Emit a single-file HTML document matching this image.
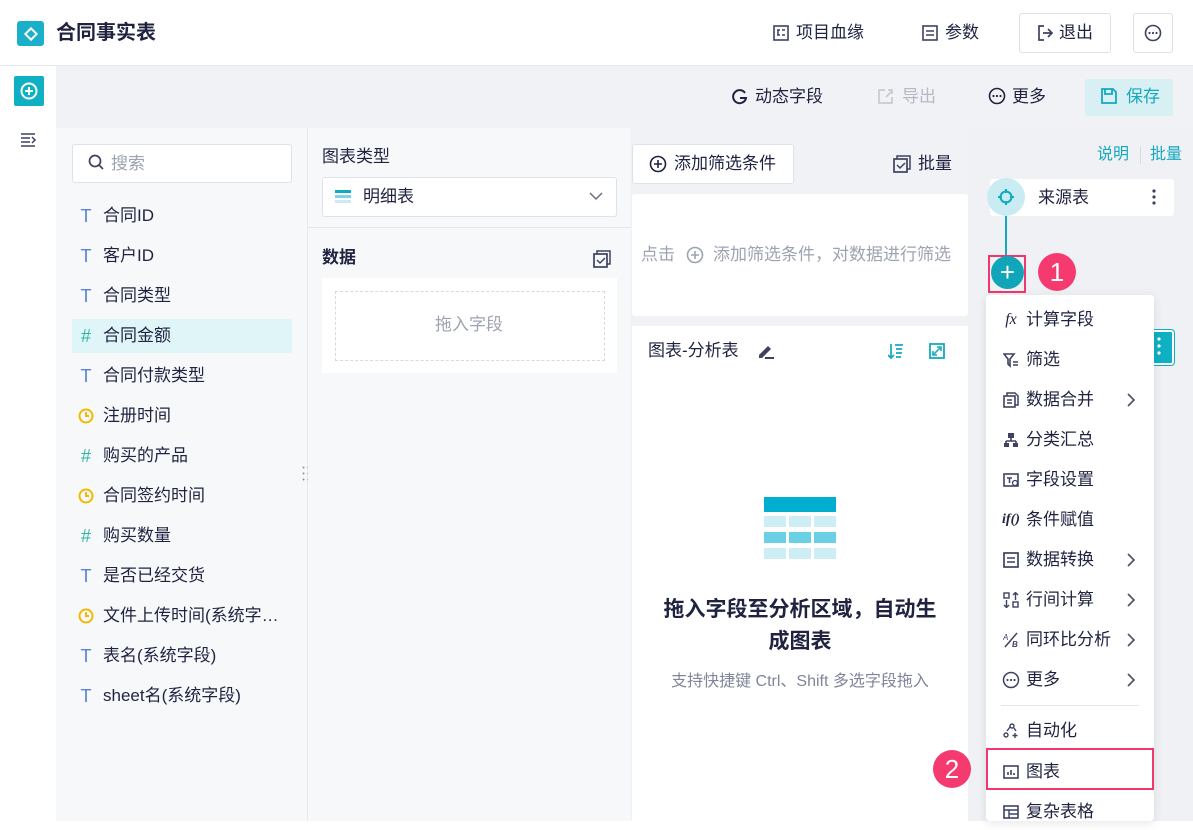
<!DOCTYPE html>
<html><head><meta charset="utf-8"><style>
*{box-sizing:border-box;margin:0;padding:0}
body{width:1193px;height:821px;overflow:hidden;background:#fff;font-family:"Liberation Sans","Noto Sans CJK SC",sans-serif;color:#1f2340;font-size:17px;line-height:22px;position:relative}
.a{position:absolute}
.t{position:absolute;white-space:nowrap}
svg{display:block}
.fi{position:absolute;left:72px;width:220px;height:34px;display:flex;align-items:center;padding-left:4px;padding-top:1px}
.fi .ic{width:20px;font-size:18px;text-align:center;margin-right:7px;display:flex;justify-content:center}
.mi{position:absolute;left:986px;width:168px;height:40px;display:flex;align-items:center;padding-left:16px;padding-top:3px;font-size:17px}
.mi .ico{width:18px;height:18px;margin-right:6px;display:flex;align-items:center;justify-content:center}
.mi .ar{position:absolute;right:18px;top:15px}
</style></head><body>
<!-- header -->
<div class="a" style="left:0;top:0;width:1193px;height:66px;background:#fff;border-bottom:1px solid #e4e6ec"></div>
<div class="a" style="left:17px;top:21px;width:27px;height:25px;background:#1ab0c9;border-radius:3px"></div>
<div class="a" style="left:26px;top:29px;width:10px;height:10px;border:2px solid #fff;transform:rotate(45deg)"></div>
<div class="t" style="left:56px;top:22px;font-size:20px;font-weight:bold;color:#1f2340">合同事实表</div>
<svg class="a" style="left:773px;top:25px" width="16" height="16"><rect x="1" y="1" width="14" height="14" fill="none" stroke="#3d4260" stroke-width="1.6"/><path d="M4 5h3M4 10h3M9 5h3M9 10h3M5 5v5" stroke="#3d4260" stroke-width="1.5"/></svg>
<div class="t" style="left:796px;top:22px">项目血缘</div>
<svg class="a" style="left:922px;top:25px" width="16" height="16"><rect x="1" y="1" width="14" height="14" fill="none" stroke="#3d4260" stroke-width="1.6"/><path d="M4 6h8M4 10h8" stroke="#3d4260" stroke-width="1.5"/></svg>
<div class="t" style="left:945px;top:22px">参数</div>
<div class="a" style="left:1019px;top:13px;width:92px;height:40px;border:1px solid #dde0e6;border-radius:3px;background:#fff"></div>
<svg class="a" style="left:1037px;top:25px" width="16" height="16"><path d="M7 1H2v14h5M6 8h9M11 4l4 4-4 4" fill="none" stroke="#3d4260" stroke-width="1.7"/></svg>
<div class="t" style="left:1059px;top:22px">退出</div>
<div class="a" style="left:1133px;top:13px;width:40px;height:40px;border:1px solid #dde0e6;border-radius:3px"></div>
<svg class="a" style="left:1144px;top:24px" width="18" height="18"><circle cx="9" cy="9" r="7.5" fill="none" stroke="#3d4260" stroke-width="1.6"/><circle cx="5.5" cy="9" r="1.1" fill="#3d4260"/><circle cx="9" cy="9" r="1.1" fill="#3d4260"/><circle cx="12.5" cy="9" r="1.1" fill="#3d4260"/></svg>
<!-- left sidebar -->
<div class="a" style="left:0;top:66px;width:56px;height:755px;background:#fff"></div>
<div class="a" style="left:14px;top:76px;width:30px;height:30px;background:#0fb0c4;border-radius:2px"></div>
<svg class="a" style="left:20px;top:82px" width="18" height="18"><circle cx="9" cy="9" r="7.5" fill="none" stroke="#fff" stroke-width="2"/><path d="M9 5v8M5 9h8" stroke="#fff" stroke-width="2"/></svg>
<svg class="a" style="left:21px;top:133px" width="16" height="14"><path d="M0 1h14M0 5h9M0 9h9M0 13h14M11 4l3 3-3 3" fill="none" stroke="#3d4260" stroke-width="1.5"/></svg>
<!-- gray area -->
<div class="a" style="left:56px;top:66px;width:1137px;height:755px;background:#f1f2f6"></div>
<!-- toolbar -->
<svg class="a" style="left:731px;top:88px" width="17" height="17"><path d="M14 5A6.5 6.5 0 1 0 15 10H9" fill="none" stroke="#1f2340" stroke-width="2"/></svg>
<div class="t" style="left:755px;top:86px">动态字段</div>
<svg class="a" style="left:877px;top:88px" width="17" height="17"><path d="M8 2H2v13h13V9M9 9l6-6M11 2h4v4" fill="none" stroke="#c7cad3" stroke-width="1.7"/></svg>
<div class="t" style="left:902px;top:86px;color:#b6b9c4">导出</div>
<svg class="a" style="left:988px;top:87px" width="18" height="18"><circle cx="9" cy="9" r="7.5" fill="none" stroke="#1f2340" stroke-width="1.6"/><circle cx="5.5" cy="9" r="1.1" fill="#1f2340"/><circle cx="9" cy="9" r="1.1" fill="#1f2340"/><circle cx="12.5" cy="9" r="1.1" fill="#1f2340"/></svg>
<div class="t" style="left:1012px;top:86px">更多</div>
<div class="a" style="left:1085px;top:79px;width:88px;height:37px;background:#d8eff3;border-radius:3px"></div>
<svg class="a" style="left:1101px;top:88px" width="16" height="16"><path d="M1 1h11l3 3v11H1z M4 1v5h7V1" fill="none" stroke="#13a9bf" stroke-width="1.8"/></svg>
<div class="t" style="left:1126px;top:86px;color:#13a9bf">保存</div>
<!-- field panel -->
<div class="a" style="left:56px;top:128px;width:251px;height:693px;background:#f7f8fa"></div>
<div class="a" style="left:307px;top:128px;width:1px;height:693px;background:#e6e8ee"></div>
<div class="a" style="left:72px;top:144px;width:220px;height:39px;background:#fff;border:1px solid #dfe2e8;border-radius:3px"></div>
<svg class="a" style="left:88px;top:154px" width="16" height="17"><circle cx="7" cy="7" r="5.5" fill="none" stroke="#3d4260" stroke-width="1.7"/><path d="M11 11l4 4" stroke="#3d4260" stroke-width="1.7"/></svg>
<div class="t" style="left:111px;top:153px;color:#9ea3b2">搜索</div>
<div class="a" style="left:72px;top:319px;width:220px;height:34px;background:#e0f5f8;border-radius:2px"></div>
<div class="fi" style="top:198px"><span class="ic" style="color:#5b82d0">T</span>合同ID</div>
<div class="fi" style="top:238px"><span class="ic" style="color:#5b82d0">T</span>客户ID</div>
<div class="fi" style="top:278px"><span class="ic" style="color:#5b82d0">T</span>合同类型</div>
<div class="fi" style="top:318px"><span class="ic" style="color:#2eb6a4">#</span>合同金额</div>
<div class="fi" style="top:358px"><span class="ic" style="color:#5b82d0">T</span>合同付款类型</div>
<div class="fi" style="top:398px"><span class="ic"><svg width="16" height="16"><circle cx="8" cy="8" r="6.5" fill="none" stroke="#f5b800" stroke-width="2"/><path d="M8 4v4h3" fill="none" stroke="#f5b800" stroke-width="2"/></svg></span>注册时间</div>
<div class="fi" style="top:438px"><span class="ic" style="color:#2eb6a4">#</span>购买的产品</div>
<div class="fi" style="top:478px"><span class="ic"><svg width="16" height="16"><circle cx="8" cy="8" r="6.5" fill="none" stroke="#f5b800" stroke-width="2"/><path d="M8 4v4h3" fill="none" stroke="#f5b800" stroke-width="2"/></svg></span>合同签约时间</div>
<div class="fi" style="top:518px"><span class="ic" style="color:#2eb6a4">#</span>购买数量</div>
<div class="fi" style="top:558px"><span class="ic" style="color:#5b82d0">T</span>是否已经交货</div>
<div class="fi" style="top:598px"><span class="ic"><svg width="16" height="16"><circle cx="8" cy="8" r="6.5" fill="none" stroke="#f5b800" stroke-width="2"/><path d="M8 4v4h3" fill="none" stroke="#f5b800" stroke-width="2"/></svg></span>文件上传时间(系统字…</div>
<div class="fi" style="top:638px"><span class="ic" style="color:#5b82d0">T</span>表名(系统字段)</div>
<div class="fi" style="top:678px"><span class="ic" style="color:#5b82d0">T</span>sheet名(系统字段)</div>
<svg class="a" style="left:302px;top:466px" width="8" height="16"><g fill="#8a90a0"><circle cx="1.5" cy="1.5" r="1"/><circle cx="6.5" cy="1.5" r="1"/><circle cx="1.5" cy="7.5" r="1"/><circle cx="6.5" cy="7.5" r="1"/><circle cx="1.5" cy="13.5" r="1"/><circle cx="6.5" cy="13.5" r="1"/></g></svg>
<!-- column 2 -->
<div class="a" style="left:308px;top:128px;width:323px;height:693px;background:#f7f8fa"></div>
<div class="t" style="left:322px;top:146px">图表类型</div>
<div class="a" style="left:322px;top:177px;width:295px;height:40px;background:#fff;border:1px solid #dfe2e8;border-radius:3px"></div>
<svg class="a" style="left:335px;top:190px" width="16" height="14"><rect width="16" height="3" fill="#13a9bf"/><rect y="5" width="16" height="3" fill="#7fd3e3"/><rect y="10" width="16" height="3" fill="#c7ecf3"/></svg>
<div class="t" style="left:363px;top:186px">明细表</div>
<svg class="a" style="left:589px;top:192px" width="14" height="9"><path d="M1 1l6 6 6-6" fill="none" stroke="#6a6f80" stroke-width="1.5"/></svg>
<div class="a" style="left:308px;top:227px;width:323px;height:1px;background:#e4e6ec"></div>
<div class="t" style="left:322px;top:247px;font-weight:bold">数据</div>
<svg class="a" style="left:593px;top:250px" width="18" height="18"><path d="M4 4V1h13v13h-3" fill="none" stroke="#3d4260" stroke-width="1.5"/><rect x="1" y="4" width="13" height="13" fill="none" stroke="#3d4260" stroke-width="1.7"/><path d="M4 10l3 3 5-5" fill="none" stroke="#3d4260" stroke-width="1.5"/></svg>
<div class="a" style="left:322px;top:278px;width:295px;height:95px;background:#fff"></div>
<div class="a" style="left:335px;top:291px;width:270px;height:70px;border:1px dashed #d6d9e1"></div>
<div class="t" style="left:435px;top:314px;color:#9ea3b2">拖入字段</div>
<!-- column 3 -->
<div class="a" style="left:632px;top:144px;width:162px;height:40px;background:#fff;border:1px solid #dfe2e8;border-radius:3px"></div>
<svg class="a" style="left:649px;top:155px" width="18" height="18"><circle cx="9" cy="9" r="7.5" fill="none" stroke="#1f2340" stroke-width="1.6"/><path d="M9 5v8M5 9h8" stroke="#1f2340" stroke-width="1.6"/></svg>
<div class="t" style="left:674px;top:153px">添加筛选条件</div>
<svg class="a" style="left:893px;top:155px" width="18" height="18"><path d="M4 4V1h13v13h-3" fill="none" stroke="#3d4260" stroke-width="1.5"/><rect x="1" y="4" width="13" height="13" fill="none" stroke="#3d4260" stroke-width="1.7"/><path d="M4 10l3 3 5-5" fill="none" stroke="#3d4260" stroke-width="1.5"/></svg>
<div class="t" style="left:918px;top:153px">批量</div>
<div class="a" style="left:632px;top:194px;width:336px;height:122px;background:#fff;border-radius:3px"></div>
<div class="t" style="left:641px;top:244px;color:#9ea3b2">点击</div>
<svg class="a" style="left:686px;top:246px" width="18" height="18"><circle cx="9" cy="9" r="7.5" fill="none" stroke="#9ea3b2" stroke-width="1.6"/><path d="M9 5v8M5 9h8" stroke="#9ea3b2" stroke-width="1.6"/></svg>
<div class="t" style="left:713px;top:244px;color:#9ea3b2">添加筛选条件，对数据进行筛选</div>
<div class="a" style="left:632px;top:326px;width:336px;height:495px;background:#fff"></div>
<div class="t" style="left:648px;top:340px">图表-分析表</div>
<svg class="a" style="left:757px;top:343px" width="18" height="16"><path d="M2 12l9-9 3 3-9 9H2z" fill="#3d4260"/><path d="M8 15h9" stroke="#3d4260" stroke-width="2"/></svg>
<svg class="a" style="left:888px;top:343px" width="16" height="16"><path d="M3 1v14M0 12l3 3 3-3M7 2h8M8 6h6M8 10h6M8 14h5" fill="none" stroke="#13a9bf" stroke-width="1.7"/></svg>
<svg class="a" style="left:929px;top:343px" width="16" height="16"><rect x="1" y="1" width="14" height="14" fill="none" stroke="#13a9bf" stroke-width="1.8"/><path d="M5 11l6-6M4 8v4h4M12 8V4H8" fill="none" stroke="#13a9bf" stroke-width="1.5"/></svg>
<svg class="a" style="left:764px;top:497px" width="72" height="64"><rect width="72" height="15" fill="#00afcf"/><g fill="#cdeef5"><rect y="19" width="22" height="11"/><rect x="25" y="19" width="22" height="11"/><rect x="50" y="19" width="22" height="11"/><rect y="51" width="22" height="11"/><rect x="25" y="51" width="22" height="11"/><rect x="50" y="51" width="22" height="11"/></g><g fill="#6ad0e3"><rect y="35" width="22" height="11"/><rect x="25" y="35" width="22" height="11"/><rect x="50" y="35" width="22" height="11"/></g></svg>
<div class="a" style="left:632px;top:594px;width:336px;text-align:center;font-size:21px;font-weight:bold;line-height:32px">拖入字段至分析区域，自动生<br>成图表</div>
<div class="a" style="left:632px;top:671px;width:336px;text-align:center;color:#80869a;font-size:16px">支持快捷键 Ctrl、Shift 多选字段拖入</div>
<!-- right panel -->
<div class="a" style="left:969px;top:128px;width:224px;height:693px;background:#f0f1f5"></div>
<div class="t" style="left:1097px;top:144px;color:#13a9bf;font-size:16px">说明</div>
<div class="a" style="left:1140px;top:146px;width:1px;height:18px;background:#d9dbe2"></div>
<div class="t" style="left:1150px;top:144px;color:#13a9bf;font-size:16px">批量</div>
<div class="a" style="left:990px;top:179px;width:184px;height:37px;background:#fff;border-radius:3px"></div>
<div class="a" style="left:987px;top:178px;width:38px;height:38px;border-radius:50%;background:#c9ecf2"></div>
<svg class="a" style="left:997px;top:188px" width="18" height="18"><circle cx="9" cy="9" r="5.5" fill="none" stroke="#13a9bf" stroke-width="2"/><path d="M9 1v4M9 13v4M1 9h4M13 9h4" stroke="#13a9bf" stroke-width="2"/></svg>
<div class="t" style="left:1038px;top:187px">来源表</div>
<svg class="a" style="left:1152px;top:189px" width="4" height="16"><g fill="#3d4260"><circle cx="2" cy="2" r="1.6"/><circle cx="2" cy="8" r="1.6"/><circle cx="2" cy="14" r="1.6"/></g></svg>
<div class="a" style="left:1005px;top:216px;width:2px;height:40px;background:#13a9bf"></div>
<div class="a" style="left:1144px;top:330px;width:30px;height:35px;background:#0fb0c4;border:2px solid #fff;outline:1px solid #0fb0c4;border-radius:3px"></div>
<svg class="a" style="left:1157px;top:337px" width="4" height="18"><g fill="#fff"><circle cx="2" cy="2" r="1.6"/><circle cx="2" cy="9" r="1.6"/><circle cx="2" cy="16" r="1.6"/></g></svg>
<div class="a" style="left:988px;top:255px;width:38px;height:38px;border:2px solid #f0386b"></div>
<div class="a" style="left:991px;top:256px;width:33px;height:33px;border-radius:50%;background:#10a5b8;color:#fff;text-align:center;line-height:32px;font-size:26px">+</div>
<div class="a" style="left:1038px;top:253px;width:38px;height:38px;border-radius:50%;background:#f43a6e;color:#fff;text-align:center;line-height:38px;font-size:26px">1</div>
<!-- menu -->
<div class="a" style="left:986px;top:295px;width:168px;height:526px;background:#fff;border-radius:4px;box-shadow:0 2px 10px rgba(0,0,0,.1)"></div>
<div class="mi" style="top:298px"><span class="ico" style="font-style:italic;font-family:'Liberation Serif';font-size:16px">fx</span>计算字段</div>
<div class="mi" style="top:338px"><span class="ico"><svg width="16" height="16"><path d="M1 2h10L7 7v7L5 12V7z" fill="none" stroke="#3d4260" stroke-width="1.6"/><path d="M10 10h5M10 13h5" stroke="#3d4260" stroke-width="1.6"/></svg></span>筛选</div>
<div class="mi" style="top:378px"><span class="ico"><svg width="16" height="16"><path d="M4 4V1h8l3 3v9h-3" fill="none" stroke="#3d4260" stroke-width="1.5"/><rect x="1" y="4" width="11" height="11" fill="none" stroke="#3d4260" stroke-width="1.6"/><path d="M4 8h5M4 11h5" stroke="#3d4260" stroke-width="1.4"/></svg></span>数据合并<svg class="ar" width="9" height="14"><path d="M1 1l6 6-6 6" fill="none" stroke="#4a4f62" stroke-width="1.6"/></svg></div>
<div class="mi" style="top:418px"><span class="ico"><svg width="16" height="16"><rect x="5" y="1" width="6" height="5" fill="#3d4260"/><path d="M8 6v3M3 9h10M3 9v2M13 9v2" stroke="#3d4260" stroke-width="1.6"/><rect x="1" y="11" width="5" height="4" fill="#3d4260"/><rect x="10" y="11" width="5" height="4" fill="#3d4260"/></svg></span>分类汇总</div>
<div class="mi" style="top:458px"><span class="ico"><svg width="16" height="16"><rect x="1" y="2" width="14" height="12" fill="none" stroke="#3d4260" stroke-width="1.6"/><path d="M4 6h5M6.5 6v5" stroke="#3d4260" stroke-width="1.5"/><circle cx="12" cy="11" r="2.5" fill="#fff" stroke="#3d4260" stroke-width="1.3"/></svg></span>字段设置</div>
<div class="mi" style="top:498px"><span class="ico" style="font-style:italic;font-family:'Liberation Serif';font-size:14px;font-weight:bold">if()</span>条件赋值</div>
<div class="mi" style="top:538px"><span class="ico"><svg width="16" height="16"><rect x="1" y="1" width="14" height="14" fill="none" stroke="#3d4260" stroke-width="1.7"/><path d="M4 6h8M4 10h8" stroke="#3d4260" stroke-width="1.5"/></svg></span>数据转换<svg class="ar" width="9" height="14"><path d="M1 1l6 6-6 6" fill="none" stroke="#4a4f62" stroke-width="1.6"/></svg></div>
<div class="mi" style="top:578px"><span class="ico"><svg width="16" height="16"><rect x="1" y="1" width="5" height="5" fill="none" stroke="#3d4260" stroke-width="1.4"/><rect x="10" y="10" width="5" height="5" fill="none" stroke="#3d4260" stroke-width="1.4"/><path d="M3.5 8v7M1 13l2.5 2.5L6 13M12.5 1v7M10 3l2.5-2.5L15 3" fill="none" stroke="#3d4260" stroke-width="1.4"/></svg></span>行间计算<svg class="ar" width="9" height="14"><path d="M1 1l6 6-6 6" fill="none" stroke="#4a4f62" stroke-width="1.6"/></svg></div>
<div class="mi" style="top:618px"><span class="ico"><svg width="16" height="16"><path d="M2 15L14 1" stroke="#3d4260" stroke-width="1.5"/><text x="0" y="8" font-size="8" font-style="italic" fill="#3d4260" font-family="Liberation Sans">A</text><text x="9" y="15" font-size="8" font-style="italic" font-weight="bold" fill="#3d4260" font-family="Liberation Sans">B</text></svg></span>同环比分析<svg class="ar" width="9" height="14"><path d="M1 1l6 6-6 6" fill="none" stroke="#4a4f62" stroke-width="1.6"/></svg></div>
<div class="mi" style="top:658px"><span class="ico"><svg width="18" height="18"><circle cx="9" cy="9" r="7.5" fill="none" stroke="#3d4260" stroke-width="1.5"/><circle cx="5.5" cy="9" r="1.1" fill="#3d4260"/><circle cx="9" cy="9" r="1.1" fill="#3d4260"/><circle cx="12.5" cy="9" r="1.1" fill="#3d4260"/></svg></span>更多<svg class="ar" width="9" height="14"><path d="M1 1l6 6-6 6" fill="none" stroke="#4a4f62" stroke-width="1.6"/></svg></div>
<div class="a" style="left:1001px;top:705px;width:138px;height:1px;background:#e4e6ec"></div>
<div class="mi" style="top:709px"><span class="ico"><svg width="16" height="16"><circle cx="9" cy="3" r="2" fill="none" stroke="#3d4260" stroke-width="1.4"/><circle cx="3" cy="12" r="2" fill="none" stroke="#3d4260" stroke-width="1.4"/><path d="M12 10v5M9.5 12.5h5M4 8l3-4M11 5l2 3" fill="none" stroke="#3d4260" stroke-width="1.4"/></svg></span>自动化</div>
<div class="a" style="left:986px;top:748px;width:168px;height:42px;border:2px solid #f0386b"></div>
<div class="mi" style="top:750px"><span class="ico"><svg width="16" height="16"><rect x="1" y="2" width="14" height="12" fill="none" stroke="#3d4260" stroke-width="1.6"/><path d="M5 11V8M8 11V6M11 11V9" stroke="#3d4260" stroke-width="1.6"/></svg></span>图表</div>
<div class="a" style="left:933px;top:750px;width:38px;height:38px;border-radius:50%;background:#f43a6e;color:#fff;text-align:center;line-height:38px;font-size:26px">2</div>
<div class="mi" style="top:790px"><span class="ico"><svg width="16" height="16"><rect x="1" y="2" width="14" height="12" fill="none" stroke="#3d4260" stroke-width="1.6"/><path d="M1 6h14M6 6v8M6 10h9" stroke="#3d4260" stroke-width="1.4"/></svg></span>复杂表格</div>
</body></html>
